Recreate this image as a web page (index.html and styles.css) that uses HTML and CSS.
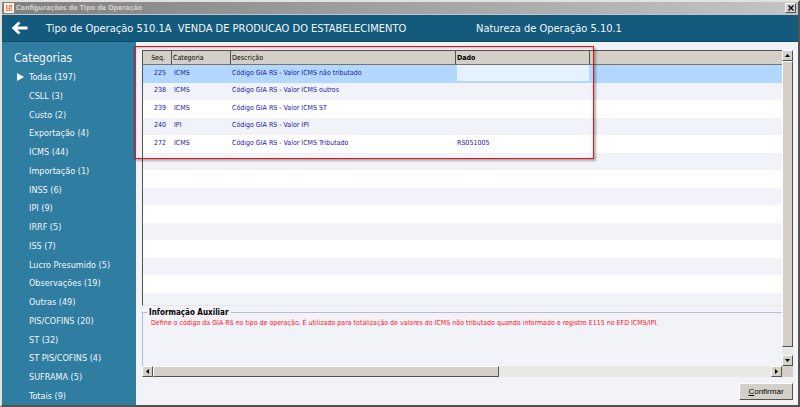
FILE: index.html
```
<!DOCTYPE html>
<html lang="pt-BR">
<head>
    <meta charset="UTF-8">
    <meta name="viewport" content="width=device-width, initial-scale=1.0">
    <title>Configurações do Tipo de Operação</title>
    <link rel="stylesheet" href="styles.css">
</head>
<body>

<div class="window">
    <div class="titlebar">
        <svg class="app-icon" viewBox="0 0 10 10" aria-hidden="true">
            <rect width="10" height="10" fill="#fff6ef"/>
            <path d="M2 2l1.500 1.500M5 2.500L6.500 4M8 2L6.500 3.500M2 5h1.500M4.500 5.500h1.500M7 5h1M2 8l1.500-1.500M5 8V6.500M8 8L6.500 6.500" fill="none" stroke="#f0622a" stroke-width="1.300"/>
        </svg>
        <span class="title">Configurações do Tipo de Operação</span>
        <button type="button" class="close" aria-label="Fechar">
            <svg viewBox="0 0 6 6"><path d="M.5 .5l5 5M5.500 .5l-5 5" stroke="#000" stroke-width="1.3"/></svg>
        </button>
    </div>

    <header class="header">
        <button type="button" class="back" aria-label="Voltar">
            <svg viewBox="0 0 16 14"><path d="M16 7H3M8 1.500L2.200 7 8 12.500" fill="none" stroke="#fff" stroke-width="2.8"/></svg>
        </button>
        <span class="operation">Tipo de Operação 510.1A&nbsp; VENDA DE PRODUCAO DO ESTABELECIMENTO</span>
        <span class="nature">Natureza de Operação 5.10.1</span>
    </header>

    <div class="content">
        <nav class="sidebar">
            <h2>Categorias</h2>
            <ul>
                <li class="active"><a href="#">Todas (197)</a></li>
                <li><a href="#">CSLL (3)</a></li>
                <li><a href="#">Custo (2)</a></li>
                <li><a href="#">Exportação (4)</a></li>
                <li><a href="#">ICMS (44)</a></li>
                <li><a href="#">Importação (1)</a></li>
                <li><a href="#">INSS (6)</a></li>
                <li><a href="#">IPI (9)</a></li>
                <li><a href="#">IRRF (5)</a></li>
                <li><a href="#">ISS (7)</a></li>
                <li><a href="#">Lucro Presumido (5)</a></li>
                <li><a href="#">Observações (19)</a></li>
                <li><a href="#">Outras (49)</a></li>
                <li><a href="#">PIS/COFINS (20)</a></li>
                <li><a href="#">ST (32)</a></li>
                <li><a href="#">ST PIS/COFINS (4)</a></li>
                <li><a href="#">SUFRAMA (5)</a></li>
                <li><a href="#">Totais (9)</a></li>
            </ul>
        </nav>

        <main class="main">
            <div class="scroll-area">
                <div class="view">
                    <div class="grid">
                        <table>
                            <colgroup>
                                <col class="col-seq">
                                <col class="col-cat">
                                <col class="col-desc">
                                <col class="col-data">
                                <col>
                            </colgroup>
                            <thead>
                                <tr><th>Seq.</th><th>Categoria</th><th>Descrição</th><th class="current">Dado</th><th></th></tr>
                            </thead>
                            <tbody>
                                <tr class="selected"><td>225</td><td>ICMS</td><td>Código GIA RS - Valor ICMS não tributado</td><td><input type="text" aria-label="Dado"></td><td></td></tr>
                                <tr><td>238</td><td>ICMS</td><td>Código GIA RS - Valor ICMS outros</td><td></td><td></td></tr>
                                <tr><td>239</td><td>ICMS</td><td>Código GIA RS - Valor ICMS ST</td><td></td><td></td></tr>
                                <tr><td>240</td><td>IPI</td><td>Código GIA RS - Valor IPI</td><td></td><td></td></tr>
                                <tr><td>272</td><td>ICMS</td><td>Código GIA RS - Valor ICMS Tributado</td><td>RS051005</td><td></td></tr>
                                <tr><td colspan="5"></td></tr>
                                <tr><td colspan="5"></td></tr>
                                <tr><td colspan="5"></td></tr>
                                <tr><td colspan="5"></td></tr>
                                <tr><td colspan="5"></td></tr>
                                <tr><td colspan="5"></td></tr>
                                <tr><td colspan="5"></td></tr>
                                <tr><td colspan="5"></td></tr>
                                <tr><td colspan="5"></td></tr>
                            </tbody>
                        </table>
                    </div>
                    <fieldset class="info">
                        <legend>Informação Auxiliar</legend>
                        <p>Define o código da GIA RS no tipo de operação. É utilizado para totalização de valores do ICMS não tributado quando informado o registro E115 no EFD ICMS/IPI.</p>
                    </fieldset>
                </div>
                <div class="scrollbar vertical">
                    <button type="button" aria-label="Rolar para cima"><svg viewBox="0 0 5 3"><path d="M0 3L2.500 0 5 3z"/></svg></button>
                    <div class="thumb"></div>
                    <button type="button" aria-label="Rolar para baixo"><svg viewBox="0 0 5 3"><path d="M0 0h5L2.500 3z"/></svg></button>
                </div>
                <div class="scrollbar horizontal">
                    <button type="button" aria-label="Rolar para a esquerda"><svg viewBox="0 0 3 5"><path d="M3 0v5L0 2.500z"/></svg></button>
                    <div class="thumb"></div>
                    <button type="button" aria-label="Rolar para a direita"><svg viewBox="0 0 3 5"><path d="M0 0v5l3-2.500z"/></svg></button>
                </div>
                <div class="corner"></div>
                <div class="highlight"></div>
            </div>
            <button type="button" class="confirm"><span><u>C</u>onfirmar</span></button>
        </main>
    </div>
</div>

</body>
</html>
```
FILE: styles.css
```
* {
    box-sizing: border-box;
}
body {
    margin: 0;
    font-family: "DejaVu Sans Condensed", "DejaVu Sans", sans-serif;
    font-size: 7px;
}
button {
    padding: 0;
    font-family: inherit;
}
svg {
    display: block;
}
.window {
    display: flex;
    flex-direction: column;
    min-height: 100vh;
    border: 2px solid #e4e2dc;
    border-right-color: #55534f;
    border-bottom-color: #55534f;
    background-color: #f2f3f9;
}

/* Title bar */
.titlebar {
    display: flex;
    align-items: center;
    gap: 2px;
    height: 13px;
    padding: 0 2px;
    background: linear-gradient(to right, #808080, #c4c4c4);
    border-bottom: 1px solid #c5c3bd;
}
.app-icon {
    width: 10px;
    height: 10px;
}
.title {
    flex: 1;
    color: #d4d0c8;
    font-weight: bold;
}
.close,
.scrollbar button,
.confirm {
    display: flex;
    align-items: center;
    justify-content: center;
    background-color: #d4d0c8;
    border: 1px solid;
    border-color: #fff #55534f #55534f #fff;
}
.close {
    width: 11px;
    height: 10px;
}
.close svg {
    width: 6px;
    height: 6px;
}

/* Header */
.header {
    display: grid;
    grid-template-columns: 44px 430px 1fr;
    align-items: center;
    height: 27px;
    background-color: #135a7c;
    border-bottom: 1px solid #0d4b69;
    color: #f2f6f8;
    font-size: 11px;
    white-space: nowrap;
}
.back {
    margin-left: 9px;
    width: 17px;
    background: none;
    border: none;
}
.back svg {
    width: 17px;
    height: 14px;
}

/* Sidebar */
.content {
    display: flex;
    flex: 1;
}
.sidebar {
    width: 134px;
    padding-top: 7px;
    background-color: #307da2;
    color: #f0f5f8;
}
.sidebar h2 {
    margin: 0;
    padding-left: 12px;
    font-size: 12px;
    font-weight: normal;
    line-height: 18px;
}
.sidebar ul {
    margin: 0;
    padding: 0;
    list-style: none;
}
.sidebar li {
    display: flex;
    align-items: center;
    height: 19px;
    padding-left: 27px;
    font-size: 9px;
    line-height: 10px;
}
.sidebar li:nth-child(4n) {
    height: 18px;
}
.sidebar a {
    color: inherit;
    text-decoration: none;
}
.sidebar .active {
    padding-left: 15px;
}
.sidebar .active::before {
    content: "";
    margin-right: 5px;
    border: 4px solid transparent;
    border-left: 7px solid #fff;
    border-right: 0;
}

/* Main area */
.main {
    display: flex;
    flex: 1;
    flex-direction: column;
    min-width: 0;
    padding: 8px 5px 5px 6px;
}
.scroll-area {
    position: relative;
    display: grid;
    grid-template-columns: 1fr 11px;
    grid-template-rows: 1fr 11px;
    flex: 1;
}
.view {
    display: flex;
    flex-direction: column;
    min-width: 0;
}
.grid {
    height: 256px;
    overflow: hidden;
    border-top: 1px solid #55534f;
    border-left: 1px solid #55534f;
    border-bottom: 1px solid #e6e5e3;
}
table {
    width: 100%;
    table-layout: fixed;
    border-collapse: separate;
    border-spacing: 0;
}
.col-seq {
    width: 29px;
}
.col-cat {
    width: 59px;
}
.col-desc {
    width: 225px;
}
.col-data {
    width: 134px;
}
th {
    height: 14px;
    padding: 0 0 0 1px;
    background-color: #d4d0c8;
    border-right: 1px solid #55534f;
    border-bottom: 1px solid #77756f;
    font-weight: normal;
    line-height: 12px;
    text-align: left;
}
th:last-child {
    border-right: none;
}
th.current {
    font-weight: bold;
}
td {
    height: 18px;
    padding: 0 1px 2px;
    color: #1b16a8;
    line-height: 15px;
    white-space: nowrap;
}
tr:nth-child(even) td {
    height: 17px;
    background-color: #f2f3f9;
}
tbody tr {
    background-color: #fff;
}
th:first-child,
td:first-child {
    padding-right: 6px;
    text-align: right;
}
td:nth-child(2) {
    padding-left: 2px;
}
.selected td {
    background-color: #b2d8ff;
}
td input {
    display: block;
    width: 100%;
    height: 16px;
    padding: 0 1px;
    border: none;
    background-color: #e5f1ff;
    color: inherit;
    font: inherit;
}
.info {
    flex: 1;
    min-width: 0;
    margin: 1px 0 0;
    padding: 0 8px;
    border: 1px solid #b9b9e6;
    border-right: none;
    border-bottom: none;
}
.info legend {
    margin-left: -4px;
    padding: 0 2px;
    font-size: 8px;
    font-weight: bold;
    line-height: 11px;
}
.info p {
    margin: 0;
    color: #ff1020;
    line-height: 10px;
    white-space: nowrap;
}

/* Scrollbars */
.scrollbar {
    display: flex;
    background-color: #e9e8e4;
}
.scrollbar button {
    flex: none;
    width: 11px;
    height: 11px;
}
.scrollbar .thumb {
    background-color: #d4d0c8;
    border: 1px solid;
    border-color: #fff #55534f #55534f #fff;
}
.vertical {
    flex-direction: column;
    justify-content: space-between;
}
.vertical .thumb {
    flex: none;
    height: 286px;
    margin-bottom: auto;
}
.vertical svg {
    width: 5px;
    height: 3px;
}
.horizontal .thumb {
    width: 54%;
    margin-right: auto;
}
.horizontal svg {
    width: 3px;
    height: 5px;
}
.corner {
    background-color: #d4d0c8;
}
.highlight {
    position: absolute;
    top: -4px;
    left: -8px;
    width: 460px;
    height: 113px;
    border: 1px solid #f00f0f;
    box-shadow: 2px 2px 2px rgba(0, 0, 0, 0.3), inset 1px 1px 2px rgba(0, 0, 0, 0.2);
    pointer-events: none;
}
.confirm {
    align-self: flex-end;
    width: 54px;
    height: 17px;
    margin-top: 6px;
    font-family: "Liberation Sans", Arial, sans-serif;
    font-size: 8px;
}
```
